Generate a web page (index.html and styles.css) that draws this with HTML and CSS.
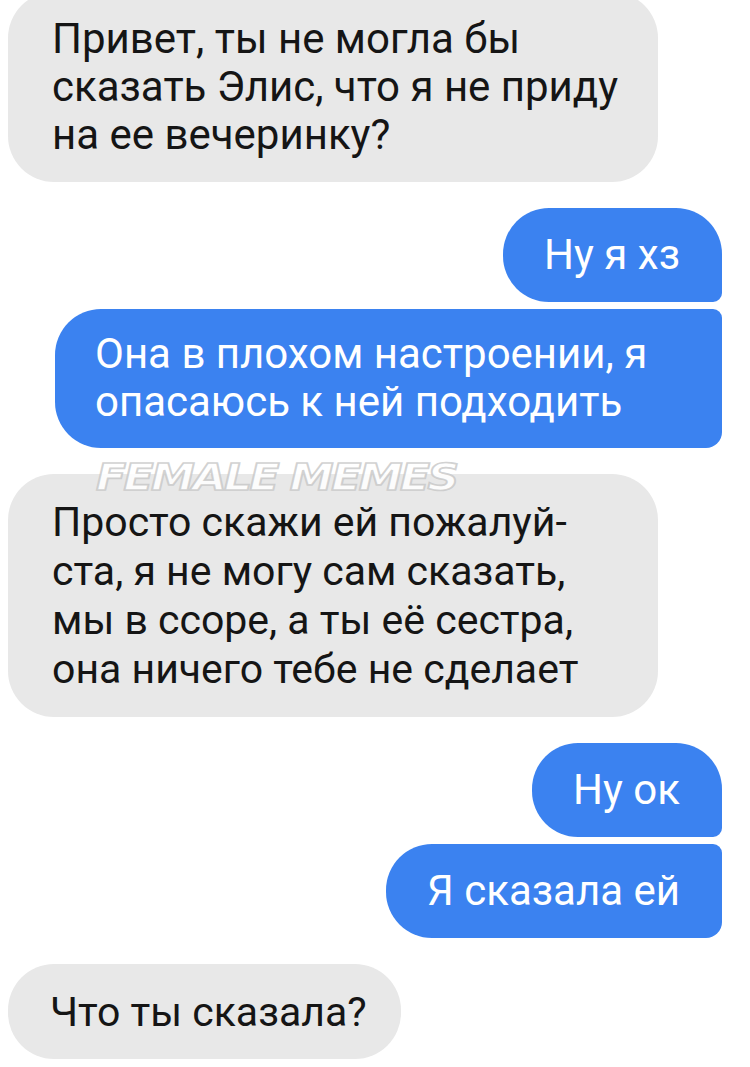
FILE: index.html
```html
<!DOCTYPE html>
<html lang="ru">
<head>
    <meta charset="UTF-8">
    <meta name="viewport" content="width=device-width, initial-scale=1.0">
    <title>Переписка</title>
    <link rel="stylesheet" href="styles.css">
</head>
<body>
    <div class="chat">
        <div class="msg in first wide">
            Привет, ты не могла бы<br>
            сказать Элис, что я не приду<br>
            на ее вечеринку?
        </div>

        <div class="group">
            <div class="msg out top">Ну я хз</div>
            <div class="msg out bottom long">
                Она в плохом настроении, я<br>
                опасаюсь к ней подходить
            </div>
        </div>

        <div class="msg in wide tall">
            <span class="watermark">FEMALE MEMES</span>
            Просто скажи ей пожалуй-<br>
            ста, я не могу сам сказать,<br>
            мы в ссоре, а ты её сестра,<br>
            она ничего тебе не сделает
        </div>

        <div class="group">
            <div class="msg out top">Ну ок</div>
            <div class="msg out bottom">Я сказала ей</div>
        </div>

        <div class="msg in short">Что ты сказала?</div>
    </div>
</body>
</html>
```

FILE: styles.css
```css
body {
    margin: 0;
    padding: 0;
    background-color: #ffffff;
    font-family: 'Roboto', 'Noto Sans', sans-serif;
    overflow: hidden;
}
.chat {
    display: flex;
    flex-direction: column;
    gap: 26px;
    padding: 0 28px 0 8px;
}
.group {
    display: flex;
    flex-direction: column;
    align-items: flex-end;
    gap: 7px;
}
.msg {
    position: relative;
    font-size: 42px;
    line-height: 48px;
    padding: 23px 38px 23px 42px;
    border-radius: 46px;
    box-sizing: border-box;
    white-space: nowrap;
}
.msg.in {
    align-self: flex-start;
    background-color: #e8e8e8;
    color: #151515;
    padding-left: 44px;
}
.msg.first {
    margin-top: -8px;
}
.msg.wide {
    width: 650px;
}
.msg.tall {
    font-size: 41px;
    line-height: 49px;
    padding-top: 24px;
}
.msg.short {
    font-size: 41px;
    padding-left: 42px;
    padding-right: 34px;
    padding-top: 24px;
    padding-bottom: 23px;
}
.msg.out {
    background-color: #3b82f0;
    color: #ffffff;
    padding-left: 41px;
    padding-right: 42px;
}
.msg.out.top {
    border-radius: 46px 46px 9px 46px;
}
.msg.out.bottom {
    border-radius: 46px 9px 16px 46px;
}
.msg.long {
    width: 667px;
    padding: 21px 38px 22px 40px;
}
.watermark {
    position: absolute;
    left: 88px;
    top: -19px;
    font-family: 'DejaVu Sans', sans-serif;
    font-weight: 900;
    font-style: italic;
    font-size: 44px;
    line-height: 44px;
    letter-spacing: -2.5px;
    color: rgba(255, 255, 255, 0.9);
    -webkit-text-stroke: 2px rgba(195, 195, 195, 0.75);
    transform: scaleY(0.85);
}
```
